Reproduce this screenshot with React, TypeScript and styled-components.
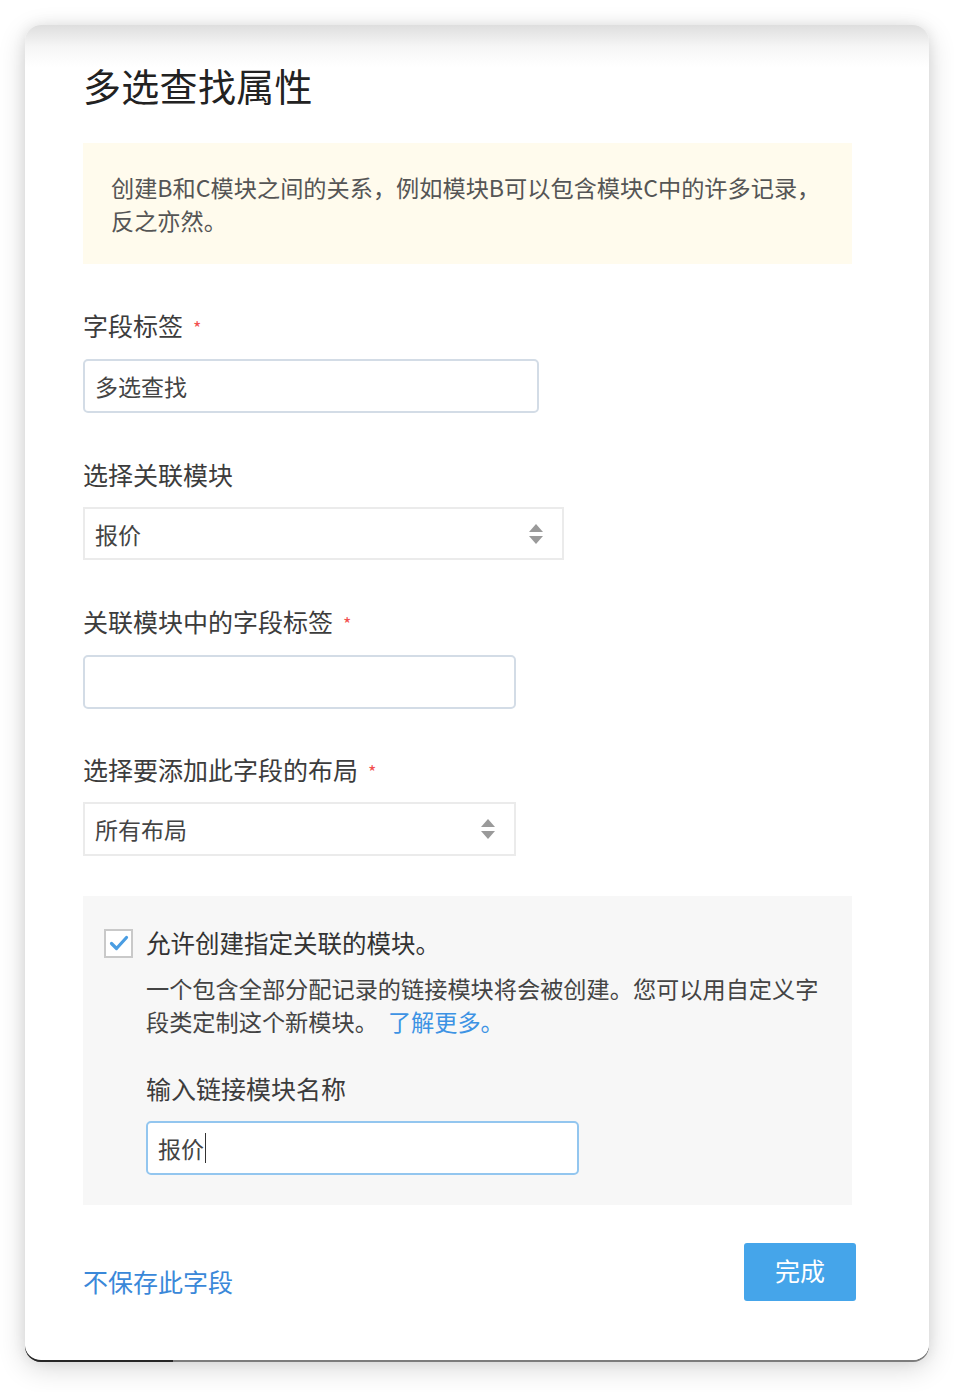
import React from "react";
import styled, { createGlobalStyle } from "styled-components";

const FONT = `"Noto Sans CJK SC", "Noto Sans", "Liberation Sans", sans-serif`;

const Global = createGlobalStyle`
  html, body { margin: 0; padding: 0; background: #ffffff; }
  body { font-family: ${FONT}; }
  * { box-sizing: border-box; }
`;

const Page = styled.div`
  padding: 25px 25px 32px 25px;
  width: 954px;
`;

const Card = styled.div`
  position: relative;
  width: 904px;
  height: 1335px;
  border-radius: 16px;
  background: linear-gradient(to bottom, #dedede 0px, #f6f6f6 22px, #ffffff 42px);
  box-shadow: 0 2px 0 0 #7c7c7c, 0 8px 28px rgba(0, 0, 0, 0.16), 0 0 14px rgba(0, 0, 0, 0.08);
  padding: 37px 77px 0 58px;
  display: flex;
  flex-direction: column;

  &::after {
    content: "";
    position: absolute;
    left: 0;
    bottom: -2px;
    width: 148px;
    height: 18px;
    border-bottom: 2px solid #262626;
    border-bottom-left-radius: 16px;
    pointer-events: none;
  }
`;

const Title = styled.h1`
  margin: 0 0 35px 0;
  font-size: 38px;
  line-height: 46px;
  font-weight: 400;
  color: #222;
  letter-spacing: 0.3px;
`;

const Notice = styled.div`
  background: #fffbed;
  padding: 28px 28px 27px 28px;
  font-size: 23.2px;
  line-height: 33px;
  color: #555;
`;

const Field = styled.div<{ $top?: number }>`
  margin-top: ${(p) => p.$top ?? 44}px;
  display: flex;
  flex-direction: column;
`;

const Label = styled.div<{ $gap?: number; $top?: number }>`
  font-size: 25px;
  line-height: 34px;
  color: #3c3c3c;
  margin-top: ${(p) => p.$top ?? 0}px;
  margin-bottom: ${(p) => p.$gap ?? 17}px;
  display: flex;
  align-items: flex-start;
`;

const Required = styled.span`
  color: #f25050;
  font-size: 18px;
  line-height: 20px;
  margin-left: 10px;
  margin-top: 9px;
`;

const TextBox = styled.div<{ $width: number; $focus?: boolean }>`
  width: ${(p) => p.$width}px;
  height: 54px;
  border: 2px solid ${(p) => (p.$focus ? "#93c6ef" : "#d3dce6")};
  border-radius: 5px;
  background: #fff;
  padding: 0 10px;
  display: flex;
  align-items: center;
  font-size: 23px;
  color: #444;
`;

const Caret = styled.span`
  display: inline-block;
  width: 1px;
  height: 30px;
  background: #333;
  margin-left: 1px;
`;

const SelectBox = styled.div<{ $width: number; $height: number }>`
  width: ${(p) => p.$width}px;
  height: ${(p) => p.$height}px;
  border: 2px solid #ebebeb;
  background: #fff;
  padding: 0 18px 0 10px;
  display: flex;
  align-items: center;
  justify-content: space-between;
  font-size: 23px;
  color: #444;
`;

const Arrows = () => (
  <svg width="16" height="24" viewBox="0 0 16 24">
    <polygon points="8,2 15,10 1,10" fill="#9a9a9a" />
    <polygon points="1,14 15,14 8,22" fill="#9a9a9a" />
  </svg>
);

const Panel = styled.div`
  margin-top: 40px;
  background: #f7f7f7;
  padding: 33px 14px 30px 21px;
  display: flex;
  flex-direction: column;
`;

const CheckRow = styled.div`
  display: flex;
  align-items: center;
  gap: 13px;
  margin-top: -3px;
`;

const CheckBox = styled.div`
  width: 29px;
  height: 29px;
  border: 2px solid #c9c9c9;
  background: #fff;
  display: flex;
  align-items: center;
  justify-content: center;
  flex: none;
`;

const CheckLabel = styled.div`
  font-size: 24.5px;
  line-height: 34px;
  color: #333;
`;

const Description = styled.p`
  margin: 12px 0 0 42px;
  font-size: 23.2px;
  line-height: 33px;
  color: #444;
  white-space: nowrap;
`;

const Link = styled.a`
  color: #3d93e4;
  text-decoration: none;
  cursor: pointer;
  margin-left: 10px;
`;

const Indented = styled.div`
  margin-left: 42px;
  display: flex;
  flex-direction: column;
`;

const Footer = styled.div`
  margin-top: 38px;
  margin-right: -4px;
  display: flex;
  justify-content: space-between;
  align-items: flex-end;
`;

const FooterLink = styled.a`
  font-size: 25px;
  line-height: 34px;
  color: #3a88d9;
  margin-bottom: 3px;
  cursor: pointer;
`;

const DoneButton = styled.button`
  width: 112px;
  height: 58px;
  border: none;
  border-radius: 3px;
  background: #45a5ea;
  color: #fff;
  font-family: ${FONT};
  font-size: 25px;
  line-height: 30px;
  padding: 0 0 4px 0;
  cursor: pointer;
`;

export default function App() {
  return (
    <>
      <Global />
      <Page>
        <Card>
          <Title>多选查找属性</Title>
          <Notice>
            创建B和C模块之间的关系，例如模块B可以包含模块C中的许多记录，
            <br />
            反之亦然。
          </Notice>

          <Field>
            <Label>
              字段标签<Required>*</Required>
            </Label>
            <TextBox $width={456}>多选查找</TextBox>
          </Field>

          <Field>
            <Label $gap={16}>选择关联模块</Label>
            <SelectBox $width={481} $height={53}>
              <span>报价</span>
              <Arrows />
            </SelectBox>
          </Field>

          <Field>
            <Label>
              关联模块中的字段标签<Required>*</Required>
            </Label>
            <TextBox $width={433} />
          </Field>

          <Field $top={43}>
            <Label $gap={16}>
              选择要添加此字段的布局<Required>*</Required>
            </Label>
            <SelectBox $width={433} $height={54}>
              <span>所有布局</span>
              <Arrows />
            </SelectBox>
          </Field>

          <Panel>
            <CheckRow>
              <CheckBox>
                <svg width="22" height="22" viewBox="0 0 22 22">
                  <path
                    d="M3.5 11.5 L8.5 16.5 L18.5 5.5"
                    fill="none"
                    stroke="#4a9de2"
                    strokeWidth="3.2"
                    strokeLinecap="round"
                    strokeLinejoin="round"
                  />
                </svg>
              </CheckBox>
              <CheckLabel>允许创建指定关联的模块。</CheckLabel>
            </CheckRow>
            <Description>
              一个包含全部分配记录的链接模块将会被创建。您可以用自定义字
              <br />
              段类定制这个新模块。<Link>了解更多。</Link>
            </Description>
            <Indented>
              <Label $gap={16} $top={33}>
                输入链接模块名称
              </Label>
              <TextBox $width={433} $focus>
                报价
                <Caret />
              </TextBox>
            </Indented>
          </Panel>

          <Footer>
            <FooterLink>不保存此字段</FooterLink>
            <DoneButton>完成</DoneButton>
          </Footer>
        </Card>
      </Page>
    </>
  );
}
